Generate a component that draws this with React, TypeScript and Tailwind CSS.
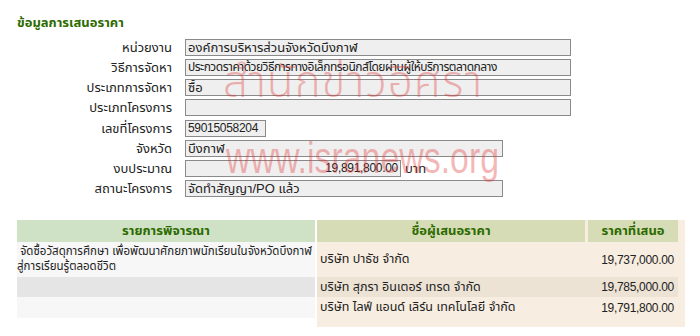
import React from 'react';

type Row = { label: string; value: string; box: string; text?: string; right?: boolean; suffix?: string };

// digits in the source are narrow, so numeric fields get a slightly smaller, tighter face
const NUM = 'text-[12px] tracking-[-0.3px]';

const rows: Row[] = [
  { label: 'หน่วยงาน',       value: 'องค์การบริหารส่วนจังหวัดบึงกาฬ', box: 'w-[386px]' },
  { label: 'วิธีการจัดหา',     value: 'ประกวดราคาด้วยวิธีการทางอิเล็กทรอนิกส์โดยผ่านผู้ให้บริการตลาดกลาง', box: 'w-[386px]', text: 'text-[12px] tracking-[-0.5px]' },
  { label: 'ประเภทการจัดหา', value: 'ซื้อ', box: 'w-[386px]' },
  { label: 'ประเภทโครงการ',  value: '', box: 'w-[386px]' },
  { label: 'เลขที่โครงการ',    value: '59015058204', box: 'w-[81px]', text: NUM },
  { label: 'จังหวัด',          value: 'บึงกาฬ', box: 'w-[318px]' },
  { label: 'งบประมาณ',        value: '19,891,800.00', box: 'w-[216px]', text: NUM, right: true, suffix: 'บาท' },
  { label: 'สถานะโครงการ',    value: 'จัดทำสัญญา/PO แล้ว', box: 'w-[318px]' },
];

const bids = [
  { name: 'บริษัท ปาธัช จำกัด', price: '19,737,000.00', row: 'h-[35px]' },
  { name: 'บริษัท สุภรา อินเตอร์ เทรด จำกัด', price: '19,785,000.00', row: 'h-[20px] bg-[#ece3d5]' },
  { name: 'บริษัท ไลฟ์ แอนด์ เลิร์น เทคโนโลยี จำกัด', price: '19,791,800.00', row: 'h-[21px]' },
];

export default function App() {
  return (
    <div className="relative w-[700px] h-[336px] bg-white overflow-hidden text-[13px] text-[#222] font-['Liberation_Sans','Noto_Sans_Thai',sans-serif]">
      {/* ── Title ── */}
      <h2 className="pl-[17px] pt-[14px] h-[37px] font-bold text-[13px] text-[#2d6a00] leading-[17px]">
        ข้อมูลการเสนอราคา
      </h2>

      {/* ── Form rows ── */}
      <div className="flex flex-col">
        {rows.map((r, i) => (
          <div key={r.label} className={`flex items-center h-[20px] ${i === 4 ? 'mt-[1px]' : ''}`}>
            <div className="w-[172px] text-right leading-[17px]">{r.label}</div>
            <div
              className={`ml-[13px] ${r.box} h-[17px] border border-[#8a8a8a] bg-[#efefef] px-[2px] leading-[15px] whitespace-nowrap overflow-hidden ${r.right ? 'text-right' : ''} ${r.text ?? ''}`}
            >
              {r.value}
            </div>
            {r.suffix && <span className="ml-[4px] leading-[17px]">{r.suffix}</span>}
          </div>
        ))}
      </div>

      {/* ── Bid table ── */}
      <div className="flex mt-[22px] ml-[17px]">
        <div className="w-[298px] flex flex-col">
          <div className="h-[22px] bg-[#cfe2c6] text-[#2d6a00] font-bold flex items-center justify-center">
            รายการพิจารณา
          </div>
          <div className="h-[35px] bg-[#f7f7f7] text-[11.5px] leading-[15px] pt-[2px]">
            &nbsp;จัดซื้อวัสดุการศึกษา เพื่อพัฒนาศักยภาพนักเรียนในจังหวัดบึงกาฬ สู่การเรียนรู้ตลอดชีวิต
          </div>
          <div className="h-[20px] bg-[#e5e5e5]" />
          <div className="h-[21px] bg-[#f7f7f7]" />
        </div>
        <div className="ml-[2px] bg-[#f7ede0] pr-[7px] pb-[9px]">
          <div className="flex">
            <div className="w-[268px] h-[22px] bg-[#d6ddb6] text-[#2d6a00] font-bold flex items-center justify-center">
              ชื่อผู้เสนอราคา
            </div>
            <div className="ml-[3px] w-[90px] h-[22px] bg-[#d6ddb6] text-[#2d6a00] font-bold flex items-center justify-center">
              ราคาที่เสนอ
            </div>
          </div>
          {bids.map((b) => (
            <div key={b.name} className={`flex items-center ${b.row}`}>
              <div className="w-[268px] pl-[3px] text-[12.5px]">{b.name}</div>
              <div className={`ml-[3px] w-[90px] text-right pr-[4px] ${NUM}`}>{b.price}</div>
            </div>
          ))}
        </div>
      </div>

      {/* ── Watermark ── */}
      <div className="absolute left-[223px] top-[54px] text-[44px] leading-[60px] tracking-[1px] font-light text-[#e03030]/35 pointer-events-none whitespace-nowrap font-['Noto_Sans_Thai',sans-serif]">
        สำนักข่าวอิศรา
      </div>
      <div className="absolute left-[226px] top-[133px] text-[44px] leading-[50px] origin-left scale-x-[0.77] text-[#e03030]/35 pointer-events-none whitespace-nowrap">
        www.isranews.org
      </div>
    </div>
  );
}
